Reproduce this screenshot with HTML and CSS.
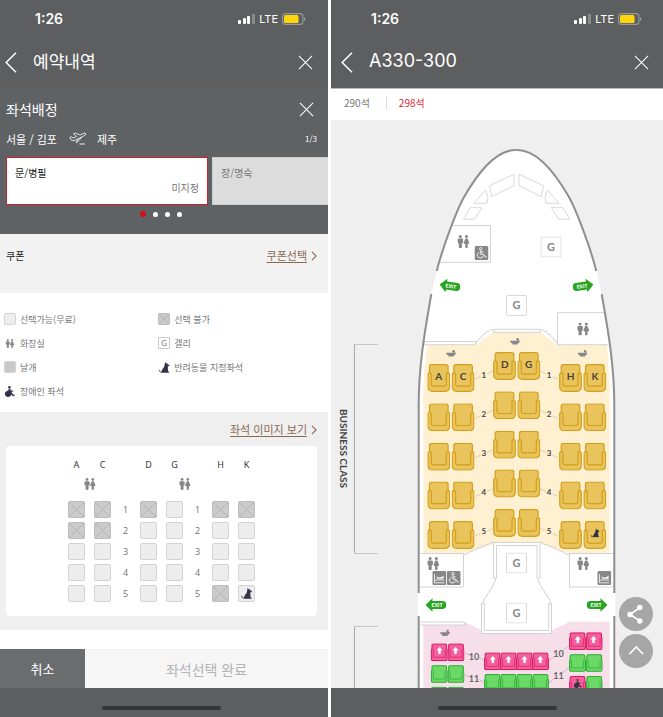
FILE: index.html
```html
<!DOCTYPE html>
<html lang="ko">
<head>
<meta charset="utf-8">
<meta name="viewport" content="width=device-width, initial-scale=1">
<title>좌석배정</title>
<link rel="stylesheet" href="styles.css">
</head>
<body>
<svg class="sprite" aria-hidden="true">
  <symbol id="signal" viewBox="0 0 17 10">
    <rect x="0" y="6" width="3" height="4" rx="1" fill="#fff"/><rect x="5" y="4" width="3" height="6" rx="1" fill="#fff"/><rect x="9" y="2" width="3" height="8" rx="1" fill="#fff"/><rect x="14" y="0" width="3" height="10" rx="1" fill="#8b8c8e"/>
  </symbol>
  <symbol id="battery" viewBox="0 0 24 12">
    <rect x=".6" y=".6" width="20.4" height="10.8" rx="3" fill="none" stroke="#98999b" stroke-width="1.1"/>
    <rect x="2" y="2" width="14.5" height="8" rx="1.5" fill="#ffd60a"/><path d="M22 4q1.4.6 1.4 2T22 8z" fill="#98999b"/>
  </symbol>
  <symbol id="back" viewBox="0 0 12 21"><path d="M11 .8 1.2 10.5 11 20.2" fill="none" stroke="#fff" stroke-width="1.5"/></symbol>
  <symbol id="close" viewBox="0 0 16 16"><path d="M1 1l14 14M15 1 1 15" fill="none" stroke="#fff" stroke-width="1.1"/></symbol>
  <symbol id="next" viewBox="0 0 6 10"><path d="M1 .8 5 5 1 9.2" fill="none" stroke="#8b6a55" stroke-width="1.1"/></symbol>
  <symbol id="takeoff" viewBox="0 0 18 13">
    <path d="M.8 5.4 2.2 4.8 4.4 6 7.4 4.6 4.6 1.6 6.2 1 11 3 14 1.6Q16.3.7 16.8 1.6 17.1 2.8 14.8 4L6.2 8.2Q3.4 9.2 2.5 8.3zM9.6 6.6 7 10.4 8.6 10 12.8 5" fill="none" stroke="#fff" stroke-width=".8" stroke-linejoin="round"/><path d="M10.500 12h5.500" stroke="#fff" stroke-width=".9"/>
  </symbol>
  <symbol id="toilet" viewBox="0 0 12 13">
    <circle cx="2.8" cy="1.5" r="1.5"/><path d="M0 4.6Q0 3.4 1.3 3.4H4.3Q5.6 3.4 5.6 4.6V7.6L4.4 8.4V12.4Q2.8 13.4 1.3 12.4V8.4L0 7.6z"/>
    <circle cx="9" cy="1.5" r="1.5"/><path d="M7.9 3.4H10.1L12 8.2Q11.4 9 10.2 9V12.4Q9 13.4 7.8 12.4V9Q6.6 9 6 8.2z"/>
  </symbol>
  <symbol id="dog" viewBox="0 0 12 12"><path d="M7.2 0 8.2 1.2 9.6 1.6 10.2 2.6 12 3.1 11.6 4.3 10.2 4.8V7L10.6 10.4 11.6 11V11.8H4C2 11.7.8 10.5 0 8.5L.6 8.2C1.3 9.8 2.2 10.6 3.2 10.6 3.4 8 5.8 6.6 6.4 4.5z"/></symbol>
  <symbol id="wheel-solid" viewBox="0 0 12 12"><circle cx="5.4" cy="1.4" r="1.4"/><path d="M4.5 3H6.5L6.8 5H9.4V6.2H7.4L9.6 9.6 11 9.2 11.4 10.2 9.2 11.4 7.8 9.3Q7 12 4.1 12 .4 11.8.4 8.2.6 5.6 4.2 4.8z"/></symbol>
  <symbol id="wheel-box" viewBox="0 0 14 14"><rect width="14" height="14" rx="1.5" fill="#878787"/><circle cx="6.2" cy="2.7" r="1.2" fill="none" stroke="#fff" stroke-width=".8"/><path d="M6.3 4V8.3H9.2L10.8 11.2 12 10.6M6.4 6H9M4.8 6.2Q2.4 7.4 2.8 9.8 3.6 12.2 6.2 12 8.4 11.6 8.8 9.6" fill="none" stroke="#fff" stroke-width=".9"/></symbol>
  <symbol id="baby-box" viewBox="0 0 14 14"><rect width="14" height="14" rx="1.5" fill="#878787"/><path d="M2.2 3V11.8H12M2.5 9H12" fill="none" stroke="#fff" stroke-width=".8"/><path d="M4 5.2 6 6.6 9 6.2 11.5 4.6 11 7.8H5z" fill="#fff"/></symbol>
  <symbol id="bassinet" viewBox="0 0 10 7"><path d="M0 2.8H6L7 2.4H10Q9.6 5 7.6 5.6V6.6H2.4V5.6Q.3 5 0 2.8z"/><circle cx="7.6" cy="1.3" r="1.3"/></symbol>
  <symbol id="exit" viewBox="0 0 21 14"><path d="M0 7 7 .2V3H17.5Q20.8 3.4 20.8 7T17.5 11H7V13.8z" fill="#27a51f"/></symbol>
  <symbol id="biz" viewBox="0 0 23 28">
    <g fill="#e9c35b" stroke="#d3a01c" stroke-width="1.2"><rect x="2.2" y=".7" width="18.6" height="22" rx="2.2"/>
    <path d="M.7 10.4Q.7 9.2 1.8 9.2H3Q4 9.2 4 10.4V20Q4 22.2 6.2 22.2H16.8Q19 22.2 19 20V10.4Q19 9.2 20 9.2H21.2Q22.3 9.2 22.3 10.4V22.6Q22.3 27.3 17.8 27.3H5.2Q.7 27.3.7 22.6z"/></g>
  </symbol>
  <symbol id="eco" viewBox="0 0 17 18"><path d="M2.4.7H14.6Q15.8.7 15.8 2V5.4Q16.4 5.6 16.4 6.4V15.6Q16.4 17.3 14.7 17.3H2.3Q.6 17.3.6 15.6V6.4Q.6 5.6 1.2 5.4V2Q1.2.7 2.4.7z" stroke-width="1.1"/><path d="M2.6 6V14H14.4V6" fill="none" stroke-width=".7"/></symbol>
  <symbol id="arrow" viewBox="0 0 6 7"><path d="M3 0 6 3.4H4.2V7H1.8V3.4H0z" fill="#fff"/></symbol>
  <symbol id="galley" viewBox="0 0 21 21"><rect x=".5" y=".5" width="20" height="20" rx="1" fill="#fff" stroke="#d9d9d9"/></symbol>
</svg>

<main class="screens">
  <section class="phone">
    <div class="status"><span class="time">1:26</span><svg class="i-signal"><use href="#signal"/></svg><span class="net">LTE</span><svg class="i-battery"><use href="#battery"/></svg></div>
    <header class="bar">
      <button class="icon-btn" aria-label="뒤로"><svg class="i-back"><use href="#back"/></svg></button>
      <h1>예약내역</h1>
      <button class="icon-btn" aria-label="닫기"><svg class="i-close"><use href="#close"/></svg></button>
    </header>

    <div class="assign">
      <div class="assign-head"><h2>좌석배정</h2><button class="icon-btn" aria-label="좌석배정 닫기"><svg class="i-close"><use href="#close"/></svg></button></div>
      <div class="route"><span>서울 / 김포</span><svg class="i-takeoff"><use href="#takeoff"/></svg><span>제주</span><span class="count">1/3</span></div>
      <div class="people">
        <button class="person active"><span>문/병필</span><span class="state">미지정</span></button>
        <button class="person"><span>장/명숙</span></button>
      </div>
      <div class="dots"><i class="on"></i><i></i><i></i><i></i></div>
    </div>

    <div class="coupon"><span>쿠폰</span><a class="more" href="#coupon"><span>쿠폰선택</span><svg class="i-next"><use href="#next"/></svg></a></div>

    <ul class="legend">
      <li><i class="seat"></i>선택가능(무료)</li>
      <li><i class="seat taken"></i>선택 불가</li>
      <li><svg class="mark small grey"><use href="#toilet"/></svg>화장실</li>
      <li><i class="galley">G</i>갤리</li>
      <li><i class="seat wing"></i>날개</li>
      <li><svg class="mark navy"><use href="#dog"/></svg>반려동물 지정좌석</li>
      <li><svg class="mark navy"><use href="#wheel-solid"/></svg>장애인 좌석</li>
    </ul>

    <div class="picker">
      <a class="more" href="#map"><span>좌석 이미지 보기</span><svg class="i-next"><use href="#next"/></svg></a>
      <div class="cabin">
        <table>
          <colgroup><col class="c"><col class="c"><col class="n"><col class="c"><col class="c"><col class="n"><col class="c"><col class="c"></colgroup>
          <thead>
            <tr class="letters"><th>A</th><th>C</th><td></td><th>D</th><th>G</th><td></td><th>H</th><th>K</th></tr>
            <tr class="wc"><td colspan="2"><svg class="i-toilet grey"><use href="#toilet"/></svg></td><td></td><td></td><td colspan="2"><svg class="i-toilet grey"><use href="#toilet"/></svg></td><td></td><td></td></tr>
          </thead>
          <tbody>
            <tr><td><button class="seat taken" disabled aria-label="1A"></button></td><td><button class="seat taken" disabled aria-label="1C"></button></td><td>1</td><td><button class="seat taken" disabled aria-label="1D"></button></td><td><button class="seat" aria-label="1G"></button></td><td>1</td><td><button class="seat taken" disabled aria-label="1H"></button></td><td><button class="seat taken" disabled aria-label="1K"></button></td></tr>
            <tr><td><button class="seat taken" disabled aria-label="2A"></button></td><td><button class="seat taken" disabled aria-label="2C"></button></td><td>2</td><td><button class="seat" aria-label="2D"></button></td><td><button class="seat" aria-label="2G"></button></td><td>2</td><td><button class="seat" aria-label="2H"></button></td><td><button class="seat" aria-label="2K"></button></td></tr>
            <tr><td><button class="seat" aria-label="3A"></button></td><td><button class="seat" aria-label="3C"></button></td><td>3</td><td><button class="seat" aria-label="3D"></button></td><td><button class="seat" aria-label="3G"></button></td><td>3</td><td><button class="seat" aria-label="3H"></button></td><td><button class="seat" aria-label="3K"></button></td></tr>
            <tr><td><button class="seat" aria-label="4A"></button></td><td><button class="seat" aria-label="4C"></button></td><td>4</td><td><button class="seat" aria-label="4D"></button></td><td><button class="seat" aria-label="4G"></button></td><td>4</td><td><button class="seat" aria-label="4H"></button></td><td><button class="seat" aria-label="4K"></button></td></tr>
            <tr><td><button class="seat" aria-label="5A"></button></td><td><button class="seat" aria-label="5C"></button></td><td>5</td><td><button class="seat" aria-label="5D"></button></td><td><button class="seat" aria-label="5G"></button></td><td>5</td><td><button class="seat taken" disabled aria-label="5H"></button></td><td><button class="seat" aria-label="5K"><svg class="i-dog navy"><use href="#dog"/></svg></button></td></tr>
          </tbody>
        </table>
      </div>
    </div>

    <div class="actions"><button class="cancel">취소</button><button class="done" disabled>좌석선택 완료</button></div>
    <div class="home"><i></i></div>
  </section>

  <section class="phone wide">
    <div class="status"><span class="time">1:26</span><svg class="i-signal"><use href="#signal"/></svg><span class="net">LTE</span><svg class="i-battery"><use href="#battery"/></svg></div>
    <header class="bar">
      <button class="icon-btn" aria-label="뒤로"><svg class="i-back"><use href="#back"/></svg></button>
      <h1 class="latin">A330-300</h1>
      <button class="icon-btn" aria-label="닫기"><svg class="i-close"><use href="#close"/></svg></button>
    </header>
    <nav class="tabs"><a href="#s290">290석</a><a class="on" href="#s298">298석</a></nav>

    <div class="map">
      <svg class="plane" viewBox="331 120 332 568" role="img" aria-label="A330-300">
        <defs>
          <path id="half" d="M516.5 150C502 149 485 160 463.3 198.3C457 210 443 246 436.7 271L431.3 294C427 320 418.7 360 418.7 405V688H517.5V150z"/>
          <g id="hull-half" fill="none" stroke="#8f8f8f" stroke-width="2">
            <path d="M516.5 150C502 149.6 485 160 463.3 198.3C457 210 443 246 436.7 271"/>
            <path d="M431.3 294C427 320 418.7 360 418.7 405V593M418.7 616V688"/>
          </g>
          <g id="windows" fill="#fff" stroke="#d9d9d9" stroke-width="1">
            <path d="M489.5 185.7 514 174.2V185.7L491.7 196.6zM474 203.3 485.7 190 488 197.3 487 203.3zM470 207.7H481.7L474.3 219.3H463.3z"/>
          </g>
          <g id="pair"><use href="#biz" width="23" height="28"/><use href="#biz" x="24.3" width="23" height="28"/></g>
          <g id="bizrow">
            <use href="#pair" x="427.3" y="12"/><use href="#pair" x="493" y="0"/><use href="#pair" x="559" y="12"/>
            <path d="M475 27 480.5 24.6M487 22 493 19M558 27 552.5 24.6M546 22 540 19" stroke="#c9bfa8" stroke-width=".7"/>
          </g>
          <g id="eco2"><use href="#eco" width="17" height="18"/><use href="#eco" x="16.7" width="17" height="18"/></g>
          <g id="eco4"><use href="#eco" width="17" height="18"/><use href="#eco" x="16" width="17" height="18"/><use href="#eco" x="32" width="17" height="18"/><use href="#eco" x="48" width="17" height="18"/></g>
        </defs>

        <g fill="none" stroke="#a9a9a9"><path d="M354.5 344V553.5M354.5 626.5V688"/><path d="M354.5 344.5H378M354.5 553.5H378M354.5 626.5H378" stroke="#c6c6c6"/></g>
        <text class="cls" transform="translate(340 409) rotate(90)">BUSINESS CLASS</text>

        <g fill="#fff"><use href="#half"/><use href="#half" transform="matrix(-1 0 0 1 1033 0)"/></g>
        <path fill="#fff" d="M417.7 593h197.6v23H417.7z"/>
        <use href="#windows"/><use href="#windows" transform="matrix(-1 0 0 1 1033 0)"/>

        <path fill="#fef0d1" d="M427 345H476L493 332.5H540.3L557.3 345H606.7Q609.7 370 609.7 400V553.5H569.3L541 544H493.7L463.7 554H423.3V400Q423.3 370 427 345z"/>
        <path fill="#f6dfe8" d="M423.3 624.5 464.7 622 482 630.5V633.5H551.5V630.5L569.7 621.7H609.7V688H423.3z"/>

        <g fill="#fff" stroke="#d3d3d3" stroke-width="1">
          <path d="M452 225.5H490.5V262.3H440"/>
          <path d="M604.5 312.7H557.5V344.7H608.5"/>
          <path d="M424.5 341.5H475.7V344.7H424zM493.3 329.3H540.3V332.3H493.3z"/>
          <path d="M475.7 344q.6-4 3-3.500-.2-3.500 3-3.200.3-3.300 3.600-3.300.4-3 3.600-2.800 1.200-2.200 4.400-1.700" />
          <path d="M557.3 344q-.6-4-3-3.500.2-3.500-3-3.200-.3-3.300-3.600-3.300-.4-3-3.600-2.800-1.200-2.200-3.800-1.700"/>
          <path d="M420 553.5H463.5V587H420M613 553.5H569.5V587H613"/>
          <path d="M420 622H464.7V625H420"/>
          <path d="M463.7 554.5q2.5 1.500 3-1.500 3 1.500 3.500-2 3 1.500 4-1.500 3 1.500 3.500-1.800 3 1.600 4-1.600 3 1.400 4-1.700 3 1.400 4-1.400l4-1"/>
          <path d="M569.3 554.5q-2.5 1.500-3-1.500-3 1.500-3.500-2-3 1.500-4-1.500-3 1.500-3.500-1.800-3 1.600-4-1.600-3 1.400-4-1.700-3 1.400-4-1.400l-3-1"/>
          <path d="M493.5 578V542.5H540V578H537V545.5H496.5V578z"/>
          <path d="M481.5 603.5H484.3V630.5H548.7V603.5H551.5V633.5H481.5z"/>
          <path d="M495.5 578.5q1 3-1.500 3.500 1 3.500-2 4 .5 3.500-2.500 4 .5 3.500-2.500 4 .5 3.500-2.500 4-.5 2-1.500 5.500M538 578.500q-1 3 1.500 3.500-1 3.500 2 4-.5 3.500 2.500 4-.5 3.500 2.500 4-.5 3.500 2.500 4 .5 2 1.500 5.500" fill="none"/>
        </g>

        <use href="#hull-half"/><use href="#hull-half" transform="matrix(-1 0 0 1 1033 0)"/>

        <g fill="#878787">
          <use href="#toilet" x="457.5" y="235" width="12" height="13"/><use href="#toilet" x="577.3" y="322.5" width="12" height="13"/>
          <use href="#toilet" x="427.3" y="557" width="12" height="13"/><use href="#toilet" x="577.3" y="557" width="12" height="13"/>
          <use href="#bassinet" x="510" y="338" width="10" height="7"/><use href="#bassinet" x="446" y="350" width="10" height="7"/><use href="#bassinet" x="577.5" y="350" width="10" height="7"/><use href="#bassinet" x="440" y="629.5" width="10" height="7"/>
        </g>
        <use href="#wheel-box" x="474.5" y="246" width="14" height="14"/><use href="#wheel-box" x="446.7" y="571" width="14" height="14"/>
        <use href="#baby-box" x="432.3" y="571" width="14" height="14"/><use href="#baby-box" x="597.3" y="571" width="14" height="14"/>

        <use href="#galley" x="540.5" y="236.5" width="21" height="21"/><use href="#galley" x="506" y="295" width="21" height="21"/><use href="#galley" x="506" y="552.5" width="21" height="21"/><use href="#galley" x="506" y="602.5" width="21" height="21"/>
        <g class="g"><text x="551" y="251">G</text><text x="516.5" y="309">G</text><text x="516.5" y="567">G</text><text x="516.5" y="617">G</text></g>

        <g class="exit">
          <g transform="translate(450 286) rotate(8)"><use href="#exit" x="-10.5" y="-7" width="21" height="14"/><text x="1" y="2">EXIT</text></g>
          <g transform="translate(583 286) rotate(-8)"><use href="#exit" x="-10.5" y="-7" width="21" height="14" transform="scale(-1 1)"/><text x="-1" y="2">EXIT</text></g>
          <g transform="translate(436 605)"><use href="#exit" x="-10.5" y="-7" width="21" height="14"/><text x="1" y="2">EXIT</text></g>
          <g transform="translate(597 605)"><use href="#exit" x="-10.5" y="-7" width="21" height="14" transform="scale(-1 1)"/><text x="-1" y="2">EXIT</text></g>
        </g>

        <use href="#bizrow" y="352"/><use href="#bizrow" y="391.3"/><use href="#bizrow" y="430.7"/><use href="#bizrow" y="469.5"/><use href="#bizrow" y="509"/>
        <use href="#dog" x="590.5" y="528.5" width="9" height="9" fill="#35333f"/>
        <g class="col"><text x="438.7" y="380">A</text><text x="463" y="380">C</text><text x="504.7" y="368">D</text><text x="528.7" y="368">G</text><text x="570.7" y="380">H</text><text x="595" y="380">K</text></g>
        <g class="row">
          <text x="483.7" y="378">1</text><text x="549" y="378">1</text><text x="483.7" y="416.5">2</text><text x="549" y="416.5">2</text><text x="483.7" y="456">3</text><text x="549" y="456">3</text><text x="483.7" y="494.5">4</text><text x="549" y="494.5">4</text><text x="483.7" y="533.5">5</text><text x="549" y="533.5">5</text>
        </g>

        <path d="M464.7 653 469.5 654.8M479 657.5 484 660.5M549 661 554 656.5M563 650.5 569 645M464.7 675 469.5 676.8M479 679.5 484 682.5M549 683 554 678.5M563 672.5 569 667" stroke="#b9aab0" stroke-width=".7"/>
        <g fill="#f2619d" stroke="#dc1a62"><use href="#eco2" x="430.8" y="643.3"/><use href="#eco4" x="484" y="652.3"/><use href="#eco2" x="569" y="632.2"/><use href="#eco" x="569" y="675.8" width="17" height="18"/></g>
        <g fill="#6cd866" stroke="#2bac35"><use href="#eco2" x="430.8" y="665"/><use href="#eco2" x="430.8" y="686.5"/><use href="#eco4" x="484" y="673.8"/><use href="#eco2" x="569" y="654"/><use href="#eco" x="585.7" y="675.8" width="17" height="18"/></g>
        <use href="#arrow" x="436.5" y="647" width="6" height="7"/><use href="#arrow" x="452.5" y="647" width="6" height="7"/>
        <use href="#arrow" x="489.8" y="656" width="6" height="7"/><use href="#arrow" x="505.5" y="656" width="6" height="7"/><use href="#arrow" x="521.5" y="656" width="6" height="7"/><use href="#arrow" x="537.3" y="656" width="6" height="7"/>
        <use href="#arrow" x="574.8" y="636" width="6" height="7"/><use href="#arrow" x="590.5" y="636" width="6" height="7"/>
        <use href="#wheel-solid" x="573.5" y="679" width="9" height="9" fill="#35333f"/>
        <g class="row eco"><text x="474" y="659.5">10</text><text x="558.5" y="656.5">10</text><text x="474" y="681.5">11</text><text x="558.5" y="678.5">11</text></g>
      </svg>
      <div class="fabs">
        <button aria-label="공유"><svg viewBox="0 0 34 34"><path d="M21 10.5 11 17.5 21 24" fill="none" stroke="#fff" stroke-width="1.6"/><g fill="#fff"><circle cx="20.800" cy="10.5" r="2.7"/><circle cx="11" cy="17.5" r="2.7"/><circle cx="20.800" cy="24" r="2.7"/></g></svg></button>
        <button aria-label="맨 위로"><svg viewBox="0 0 34 34"><path d="M10.500 20 17.300 13 24 20" fill="none" stroke="#fff" stroke-width="1.7"/></svg></button>
      </div>
    </div>
    <div class="home"><i></i></div>
  </section>
</main>
</body>
</html>
```
FILE: styles.css
```css
* { box-sizing: border-box; }
body { margin: 0; background: #fff; color: #222; font-family: "Noto Sans CJK KR", sans-serif; }
h1, h2 { margin: 0; font-weight: 400; }
button { margin: 0; padding: 0; border: 0; background: none; font: inherit; color: inherit; }
a { color: inherit; text-decoration: none; }
svg { display: block; flex: none; }
.sprite { position: absolute; width: 0; height: 0; }

.screens { display: grid; grid-template-columns: 328fr 332fr; gap: 3px; min-height: 100vh; }
.phone { --inset: 0px; --edge: 15px; display: flex; flex-direction: column; min-width: 0; }
.phone.wide { --inset: 5px; --edge: 14px; }

.status { display: flex; align-items: center; height: 38px; padding: 0 calc(var(--edge) + 7px) 0 calc(35px + var(--inset)); background: #5d5e60; color: #fff; }
.time { margin-right: auto; font: 600 14px/20px Inter, sans-serif; }
.net { margin: 0 4px; font: 400 11px/20px Inter, sans-serif; }
.i-signal { width: 17px; height: 10px; }
.i-battery { width: 24px; height: 12px; }

.bar { display: flex; align-items: center; height: 50px; padding: 0 var(--edge) 4px calc(5px + var(--inset)); background: #5d5e60; color: #fff; }
.bar h1 { flex: 1; margin-left: 16px; font-size: 17px; line-height: 24px; }
.bar h1.latin { font-family: Inter, sans-serif; font-size: 18px; }
.i-back { width: 12px; height: 21px; }
.i-close { width: 15px; height: 15px; }
.bar .icon-btn { padding-top: 3px; }

.assign { height: 146px; padding: 8px 0 0 6px; overflow: hidden; background: #5f6265; color: #fff; }
.assign-head { display: flex; justify-content: space-between; align-items: center; height: 26px; padding-right: 14px; }
.assign-head h2 { font-size: 14px; line-height: 24px; }
.route { display: flex; align-items: center; height: 35px; padding: 0 11px 2px 0; font-size: 11px; }
.i-takeoff { width: 18px; height: 13px; margin: 0 10px 0 12px; }
.count { margin-left: auto; font-size: 8px; }
.people { display: flex; gap: 4px; overflow: hidden; }
.person { display: flex; flex: 0 0 202px; flex-direction: column; height: 48px; padding: 7px 8px 0; border: 1px solid #cfcfcf; background: #dcdcdc; color: #777; font-size: 10px; line-height: 15px; text-align: left; }
.person.active { border-color: #d0202c; background: #fff; color: #222; }
.state { align-self: flex-end; color: #777; }
.dots { display: flex; justify-content: center; align-items: center; gap: 7px; height: 18px; padding-right: 12px; }
.dots i { width: 5px; height: 5px; border-radius: 50%; background: #fff; }
.dots .on { width: 6px; height: 6px; background: #d60c18; }

.coupon { display: flex; justify-content: space-between; align-items: flex-start; height: 59px; padding: 13px 11px 0 6px; background: #f2f2f2; font-size: 10px; line-height: 17px; }
.more { display: flex; justify-content: flex-end; align-items: center; gap: 4px; color: #8b6a55; font-size: 11px; line-height: 17px; }
.more span { text-decoration: underline; text-underline-offset: 2px; }
.i-next { width: 6px; height: 10px; }

.legend { display: grid; grid-template-columns: 10fr 11fr; grid-auto-rows: 24px; height: 119px; margin: 0; padding: 14px 0 0 4px; list-style: none; color: #777; font-size: 9px; }
.legend li { display: flex; align-items: center; gap: 4px; }
.legend .seat, .galley { width: 12px; height: 12px; }
.galley { border: 1px solid #ccc; font: 8px/10px Lato, sans-serif; text-align: center; }
.mark { width: 12px; height: 11px; }
.mark.small { height: 9px; }
.grey { fill: #878787; }
.navy { fill: #35334a; }

.seat { display: block; width: 17px; height: 17px; border: 1px solid #d3d3d3; border-radius: 2px; background: #ededed; }
.seat.wing { background: #c9c9c9; }
.seat.taken {
  border-color: #bdbdbd;
  background:
    linear-gradient(45deg, transparent 47%, #b3b3b3 47% 53%, transparent 53%),
    linear-gradient(-45deg, transparent 47%, #b3b3b3 47% 53%, transparent 53%),
    #cbcbcb;
}

.picker { flex: 1; padding: 9px 11px 12px 6px; background: #efefef; }
.cabin { margin-top: 8px; padding: 10px 0 12px; border-radius: 4px; background: #fff; }
.cabin table { width: 196px; margin: 0 auto; border-collapse: collapse; table-layout: fixed; }
.cabin col.c { width: 26px; }
.cabin col.n { width: 20px; }
.cabin th, .cabin td { height: 21px; padding: 0; color: #777; font: 9px/12px "Noto Sans", sans-serif; text-align: center; }
.cabin .letters th, .cabin .letters td { height: 18px; color: #333; }
.cabin .wc td { height: 20px; }
.cabin .seat, .i-toilet { margin: 0 auto; }
.cabin tbody::before { content: ""; display: block; height: 5px; }
.i-toilet { width: 12px; height: 12px; }
.i-dog { width: 11px; height: 11px; margin: 0 auto; }

.actions { display: flex; height: 58px; padding-top: 19px; background: #fff; }
.cancel { flex: 85; background: #6b6c70; color: #fff; font-size: 13px; }
.done { flex: 243; background: #f6f6f6; color: #b3b3b3; font-size: 14px; }

.home { display: flex; justify-content: center; height: 29px; padding: 18px 5px 0 var(--inset); background: #5d5e60; }
.home i { width: 119px; height: 4px; border-radius: 2px; background: #363636; }

.tabs { display: flex; align-items: center; height: 32px; padding: 0 13px 3px; border-top: 1px solid #b9b9b9; background: #fff; color: #777; font-size: 10px; line-height: 14px; }
.tabs a + a { margin-left: 16px; padding-left: 12px; border-left: 1px solid #ddd; }
.tabs .on { color: #dc1f32; }

.map { position: relative; flex: 1; overflow: hidden; background: #efefef; }
.plane { width: 100%; height: auto; }
.plane text { font-family: Lato, sans-serif; text-anchor: middle; }
.plane .cls { fill: #444; font-size: 10px; font-weight: 700; text-anchor: start; }
.g text { fill: #878787; font-size: 11px; font-weight: 700; }
.exit text { fill: #fff; font-size: 5px; font-weight: 900; }
.col text { fill: #4a4335; font-size: 10px; font-weight: 700; }
.row text { fill: #444; font-size: 8px; font-weight: 700; }
.row.eco text { fill: #666; font-size: 9px; }

.fabs { position: absolute; right: 10px; bottom: 20px; display: grid; gap: 3px; }
.fabs button { width: 34px; height: 34px; border-radius: 50%; background: #a6a6a6; }
```
